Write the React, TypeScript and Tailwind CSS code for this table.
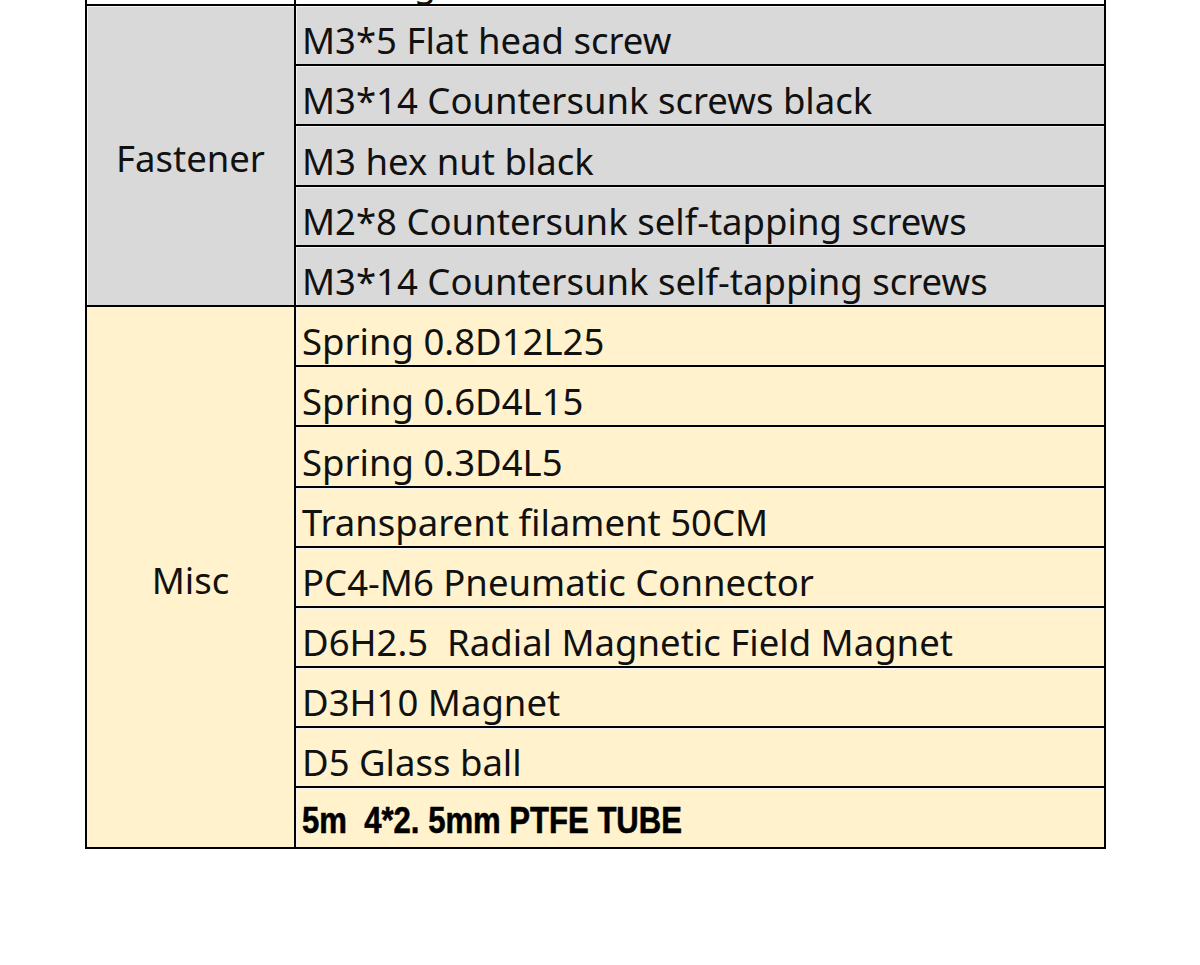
import React from 'react';

// Parts list: grouped rows, group label spans the rows on the left
const groups = [
  {
    label: 'Fastener',
    bg: 'bg-[#d9d9d9]',
    items: [
      'M3*5 Flat head screw',
      'M3*14 Countersunk screws black',
      'M3 hex nut black',
      'M2*8 Countersunk self-tapping screws',
      'M3*14 Countersunk self-tapping screws',
    ],
  },
  {
    label: 'Misc',
    bg: 'bg-[#fff2cc]',
    items: [
      'Spring 0.8D12L25',
      'Spring 0.6D4L15',
      'Spring 0.3D4L5',
      'Transparent filament 50CM',
      'PC4-M6 Pneumatic Connector',
      'D6H2.5  Radial Magnetic Field Magnet',
      'D3H10 Magnet',
      'D5 Glass ball',
      '5m  4*2. 5mm PTFE TUBE',
    ],
  },
];

const cellText = "font-['Noto_Sans',sans-serif] text-[36.5px] leading-none text-[#111] whitespace-pre";

export default function App() {
  return (
    <div className="w-[1200px] h-[965px] bg-white overflow-hidden">
      {/* table is scrolled: the row above Fastener is cut off at the top */}
      <div className="ml-[85px] -mt-[57px]">
        <table className="border-collapse w-[1021px] table-fixed">
          <colgroup>
            <col className="w-[209px]" />
            <col />
          </colgroup>
          <tbody>
            <tr className="h-[61px]">
              <td className="border-2 border-black bg-white" />
              <td className="border-2 border-black bg-white align-bottom pl-[6px] pb-[2px]">
                <span className={cellText}>Bearing</span>
              </td>
            </tr>
            {groups.map((g) =>
              g.items.map((item, i) => {
                const isTube = item.startsWith('5m');
                return (
                  <tr key={item} className="h-[60.2px]">
                    {i === 0 && (
                      <td
                        rowSpan={g.items.length}
                        className={`border-2 border-black ${g.bg} text-center align-middle pt-[8px] shadow-[inset_1px_1px_0_#f4f4f4]`}
                      >
                        <span className={cellText}>{g.label}</span>
                      </td>
                    )}
                    <td
                      className={`border-2 border-black ${g.bg} align-bottom pl-[6px] ${
                        isTube ? 'pb-[8px]' : 'pb-[4px]'
                      } shadow-[inset_1px_1px_0_#f4f4f4]`}
                    >
                      {isTube ? (
                        <span className="inline-block origin-left scale-x-[0.84] font-['Liberation_Sans',sans-serif] font-bold text-[37px] leading-none text-black whitespace-pre [-webkit-text-stroke:0.6px_black]">
                          {item}
                        </span>
                      ) : (
                        <span className={cellText}>{item}</span>
                      )}
                    </td>
                  </tr>
                );
              })
            )}
          </tbody>
        </table>
      </div>
    </div>
  );
}
